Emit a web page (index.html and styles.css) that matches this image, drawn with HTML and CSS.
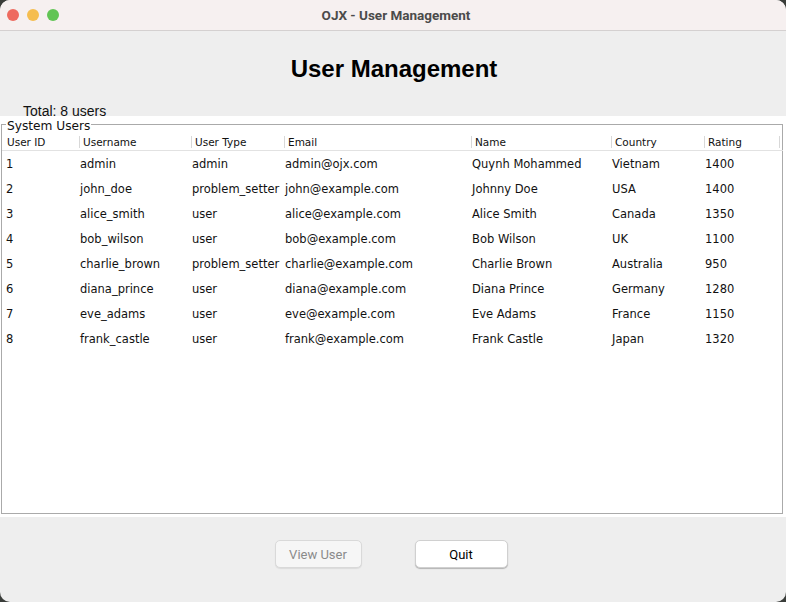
FILE: index.html
```html
<!DOCTYPE html>
<html>
<head>
<meta charset="utf-8">
<title>OJX - User Management</title>
<link rel="stylesheet" href="styles.css">
</head>
<body>
<div class="window">
  <div class="titlebar">
    <div class="lights">
      <span class="light red"></span>
      <span class="light yellow"></span>
      <span class="light green"></span>
    </div>
    <div class="wintitle">OJX - User Management</div>
  </div>
  <div class="top">
    <h1 class="heading">User Management</h1>
    <div class="total">Total: 8 users</div>
  </div>
  <div class="panel">
    <fieldset class="group">
      <legend class="legend">System Users</legend>
      <div class="table">
        <div class="hcell first">User ID</div>
        <div class="hcell">Username</div>
        <div class="hcell">User Type</div>
        <div class="hcell">Email</div>
        <div class="hcell">Name</div>
        <div class="hcell">Country</div>
        <div class="hcell">Rating</div>
        <div class="hcell end"></div>

        <div class="cell first">1</div><div class="cell">admin</div><div class="cell">admin</div><div class="cell">admin@ojx.com</div><div class="cell">Quynh Mohammed</div><div class="cell">Vietnam</div><div class="cell">1400</div><div class="cell"></div>
        <div class="cell first">2</div><div class="cell">john_doe</div><div class="cell">problem_setter</div><div class="cell">john@example.com</div><div class="cell">Johnny Doe</div><div class="cell">USA</div><div class="cell">1400</div><div class="cell"></div>
        <div class="cell first">3</div><div class="cell">alice_smith</div><div class="cell">user</div><div class="cell">alice@example.com</div><div class="cell">Alice Smith</div><div class="cell">Canada</div><div class="cell">1350</div><div class="cell"></div>
        <div class="cell first">4</div><div class="cell">bob_wilson</div><div class="cell">user</div><div class="cell">bob@example.com</div><div class="cell">Bob Wilson</div><div class="cell">UK</div><div class="cell">1100</div><div class="cell"></div>
        <div class="cell first">5</div><div class="cell">charlie_brown</div><div class="cell">problem_setter</div><div class="cell">charlie@example.com</div><div class="cell">Charlie Brown</div><div class="cell">Australia</div><div class="cell">950</div><div class="cell"></div>
        <div class="cell first">6</div><div class="cell">diana_prince</div><div class="cell">user</div><div class="cell">diana@example.com</div><div class="cell">Diana Prince</div><div class="cell">Germany</div><div class="cell">1280</div><div class="cell"></div>
        <div class="cell first">7</div><div class="cell">eve_adams</div><div class="cell">user</div><div class="cell">eve@example.com</div><div class="cell">Eve Adams</div><div class="cell">France</div><div class="cell">1150</div><div class="cell"></div>
        <div class="cell first">8</div><div class="cell">frank_castle</div><div class="cell">user</div><div class="cell">frank@example.com</div><div class="cell">Frank Castle</div><div class="cell">Japan</div><div class="cell">1320</div><div class="cell"></div>
      </div>
    </fieldset>
  </div>
  <div class="buttons">
    <button class="btn disabled" disabled>View User</button>
    <button class="btn quit">Quit</button>
  </div>
</div>
</body>
</html>
```

FILE: styles.css
```css
html, body {
  margin: 0;
  padding: 0;
  background: #3a3d3a;
}
.window {
  width: 786px;
  height: 602px;
  background: #eeeeee;
  border-radius: 10px;
  overflow: hidden;
  display: flex;
  flex-direction: column;
}
.titlebar {
  height: 30px;
  flex: none;
  background: #f6f0f0;
  border-bottom: 1px solid #d4d0d0;
  position: relative;
  display: flex;
  align-items: center;
  justify-content: center;
}
.lights {
  position: absolute;
  left: 7px;
  top: 9px;
  display: flex;
  gap: 8px;
}
.light {
  width: 12px;
  height: 12px;
  border-radius: 50%;
  display: block;
}
.red { background: #ee6a5f; }
.yellow { background: #f5bd4f; }
.green { background: #61c454; }
.wintitle {
  font-family: Roboto, "Liberation Sans", sans-serif;
  font-weight: 700;
  font-size: 13.5px;
  color: #4b4b4b;
  margin-left: 6px;
}
.top {
  flex: none;
  padding-top: 24px;
}
.heading {
  margin: 0;
  text-align: center;
  font-family: "Liberation Sans", Arial, sans-serif;
  font-weight: 700;
  font-size: 24px;
  line-height: 28px;
  color: #000;
  padding-left: 2px;
}
.total {
  margin-top: 22px;
  padding-left: 23px;
  font-family: "Liberation Sans", Arial, sans-serif;
  font-size: 14px;
  line-height: 13px;
  height: 11px;
  color: #111;
}
.panel {
  flex: none;
  background: #ffffff;
  height: 401px;
  box-sizing: border-box;
  padding: 0 3px 3px 1px;
  display: flex;
}
.group {
  margin: 0;
  padding: 0;
  border: 1px solid #aaaaaa;
  flex: 1;
  min-width: 0;
  box-sizing: border-box;
}
.legend {
  padding: 3px 1px 0;
  margin-left: 4px;
  font-family: "DejaVu Sans", "Open Sans", sans-serif;
  font-size: 12.2px;
  line-height: 14px;
  color: #111;
}
.table {
  display: grid;
  grid-template-columns: 77px 112px 93px 187px 140px 93px 75px 1fr;
  grid-auto-rows: 25px;
  grid-template-rows: 16px;
  margin-top: 1px;
  font-family: "DejaVu Sans", "Open Sans", sans-serif;
  color: #111;
}
.hcell {
  font-size: 10.5px;
  line-height: 16px;
  height: 16px;
  border-bottom: 1px solid #e2e2e2;
  padding-left: 4px;
  position: relative;
  white-space: nowrap;
  overflow: hidden;
}
.hcell::before {
  content: "";
  position: absolute;
  left: 0;
  top: 2px;
  height: 12px;
  border-left: 1px solid #d8d8d8;
}
.hcell.first {
  padding-left: 5px;
}
.hcell.first::before {
  display: none;
}
.cell {
  font-size: 11.5px;
  line-height: 21px;
  padding-top: 4px;
  padding-left: 1px;
  white-space: nowrap;
  overflow: hidden;
}
.cell.first {
  padding-left: 4px;
}
.buttons {
  flex: none;
  display: flex;
  justify-content: center;
  gap: 53px;
  padding-top: 23px;
  padding-right: 4px;
}
.btn {
  height: 28px;
  box-sizing: border-box;
  border-radius: 5px;
  font-family: Roboto, "Liberation Sans", sans-serif;
  font-size: 13px;
  padding: 0;
  border: 1px solid #d9d9d9;
}
.btn.disabled {
  width: 87px;
  background: #f6f6f6;
  color: #8a8a8a;
  box-shadow: 0 1px 1px rgba(0, 0, 0, 0.08);
}
.btn.quit {
  width: 93px;
  background: #ffffff;
  color: #000;
  border-color: #d0d0d0;
  box-shadow: 0 1px 1px rgba(0, 0, 0, 0.25);
}
```
